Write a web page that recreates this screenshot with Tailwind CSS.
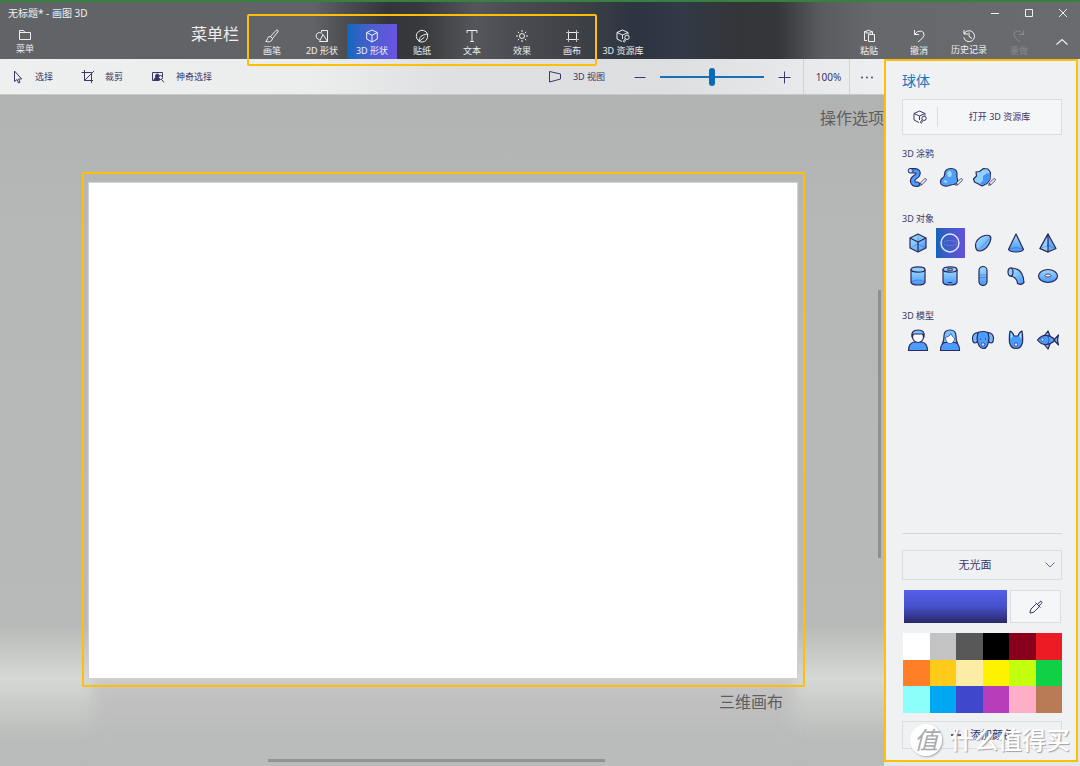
<!DOCTYPE html>
<html lang="zh-CN">
<head>
<meta charset="utf-8">
<meta name="viewport" content="width=device-width, initial-scale=1">
<title>无标题* - 画图 3D</title>
<script src="https://cdn.jsdelivr.net/npm/@tailwindcss/browser@4"></script>
</head>
<body class="flex h-screen flex-col overflow-hidden bg-[#e4e5e7] font-['Noto_Sans','Noto_Sans_CJK_SC',sans-serif] text-[9px] leading-3 text-[#3b3768]">

<svg class="absolute size-0" aria-hidden="true">
  <defs>
    <linearGradient id="blue" x1="0" y1="0" x2="1" y2="1"><stop offset=".3" stop-color="#8fd0ff"/><stop offset="1" stop-color="#4493fb"/></linearGradient>
    <linearGradient id="down" x1="0" y1="0" x2="0" y2="1"><stop offset=".2" stop-color="#8fd0ff"/><stop offset="1" stop-color="#4493fb"/></linearGradient>
    <symbol id="library" viewBox="0 0 16 16">
      <path d="M7 13.500 2 11V4.500L7.500 2 13 4.500V6.500M2 4.500 7.500 7 13 4.500M7.500 7v4"/>
      <circle cx="12" cy="9.300" r="2.200"/><path d="m10.300 11-1.600 1.500q-.7 1.500.6 1.500 1.200-.3 1-2.200"/>
    </symbol>
    <symbol id="pencil" viewBox="0 0 8 8"><path d="M.7 7.300 1.300 5 5.500.9Q6.500.3 7.200 1T7 2.700L2.800 6.800ZM1.300 5l1.500 1.800" fill="#f0f1f3" stroke="#2f2a5e" stroke-width=".8"/></symbol>
  </defs>
</svg>

<!-- Title bar and ribbon -->
<header class="relative shrink-0 border-t-2 border-[#37803f] bg-[linear-gradient(90deg,#626367_0%,#626367_29%,#4c4d50_32%,#343538_36%,#38393c_39%,#55565b_44%,#4a4b50_48%,#404247_53%,#2c3441_59%,#313a46_63%,#343539_68%,#35363a_72%,#5a5b5f_76%,#67686c_81%,#6a6b6f_100%)] text-white/90">
  <div class="flex h-[22px] items-center justify-between">
    <h1 class="pl-2 text-[10px]">无标题* - 画图 3D</h1>
    <div class="flex">
      <button class="grid h-5 w-[34px] place-items-center" aria-label="最小化"><svg class="size-3" viewBox="0 0 12 12" stroke="currentColor"><path d="M2 6.500h8"/></svg></button>
      <button class="grid h-5 w-[34px] place-items-center" aria-label="最大化"><svg class="size-3" viewBox="0 0 12 12" fill="none" stroke="currentColor"><path d="M2.500 2.500h7v7h-7z"/></svg></button>
      <button class="grid h-5 w-[34px] place-items-center" aria-label="关闭"><svg class="size-3" viewBox="0 0 12 12" fill="none" stroke="currentColor"><path d="m2 2 8 8m0-8-8 8"/></svg></button>
    </div>
  </div>
  <div class="flex h-[35px] justify-between">
    <div class="flex">
      <div class="flex w-[248px] justify-between pr-[9px]">
        <button class="flex w-[50px] flex-col items-center pt-[3px]"><svg class="size-4" viewBox="0 0 16 16" fill="none" stroke="currentColor"><path d="M2.500 12.500v-9h4l1.500 2h5.500v7zM2.500 5.500H8"/></svg><span>菜单</span></button>
        <span class="text-[16px] leading-5">菜单栏</span>
      </div>
      <nav class="relative -ml-px flex">
        <button class="flex w-[50px] flex-col items-center pt-1"><svg class="size-4" viewBox="0 0 16 16" fill="none" stroke="currentColor"><path d="M6.500 8.500 12 2.500q1-1 1.800-.3t0 1.800L8.500 10.500zM6.500 8.500q-2.500-.2-3 2Q3 12.800 1.700 13.300q2 .9 4 .4 2.400-.6 2.800-3.200z"/></svg><span class="leading-[14px]">画笔</span></button>
        <button class="flex w-[50px] flex-col items-center pt-1"><svg class="size-4" viewBox="0 0 16 16" fill="none" stroke="currentColor"><path d="M7.500 4V2.500h6v10.500M5.500 11.500a3.500 3.500 0 1 1 3-5.500M9 6.500 5.500 13.500h8z"/></svg><span class="leading-[14px]">2D 形状</span></button>
        <button aria-pressed="true" class="flex w-[50px] flex-col items-center bg-linear-to-r from-[#0567bd] to-[#6a52e2] pt-1"><svg class="size-4" viewBox="0 0 16 16" fill="none" stroke="currentColor" stroke-linejoin="round"><path d="M8 2 13.300 4.500v6.500L8 14 2.700 11V4.500zM2.700 4.500 8 7.300l5.300-2.800M8 7.300V14"/></svg><span class="leading-[14px]">3D 形状</span></button>
        <button class="flex w-[50px] flex-col items-center pt-1"><svg class="size-4" viewBox="0 0 16 16" fill="none" stroke="currentColor"><path d="M13.500 6A5.800 5.800 0 1 0 5 13M5 13.500q-.5-6.500 8.700-7.500.3 8-5.700 8-1.700 0-3-.5Zm0 0 5.500-4.500"/></svg><span class="leading-[14px]">贴纸</span></button>
        <button class="flex w-[50px] flex-col items-center pt-1"><svg class="size-4" viewBox="0 0 16 16" fill="none" stroke="currentColor"><path d="M3 5V2.500h10V5M8 2.500v11M6 13.500h4"/></svg><span class="leading-[14px]">文本</span></button>
        <button class="flex w-[50px] flex-col items-center pt-1"><svg class="size-4" viewBox="0 0 16 16" fill="none" stroke="currentColor"><circle cx="8" cy="8" r="2.500"/><path d="M8 2v2M8 12v2M2 8h2M12 8h2M3.800 3.800l1.400 1.400M10.800 10.800l1.400 1.400M3.800 12.200l1.400-1.400M10.800 5.200l1.400-1.400"/></svg><span class="leading-[14px]">效果</span></button>
        <button class="flex w-[50px] flex-col items-center pt-1"><svg class="size-4" viewBox="0 0 16 16" fill="none" stroke="currentColor"><path d="M4.500 4.500h8v7h-8z"/><path d="M4.500 2v2M12.500 2v2M4.500 12v2M12.500 12v2M2 4.500h2M13 4.500h2M2 11.500h2M13 11.500h2" stroke-opacity=".7"/></svg><span class="leading-[14px]">画布</span></button>
        <div class="pointer-events-none absolute -top-[10px] right-0 -bottom-[7px] left-0 z-10 rounded-xs border-2 border-[#ffbf08]"></div>
      </nav>
      <button class="flex w-[52px] flex-col items-center pt-1"><svg class="size-4" fill="none" stroke="currentColor"><use href="#library"/></svg><span class="leading-[14px]">3D 资源库</span></button>
    </div>
    <div class="flex">
      <button class="flex w-[50px] flex-col items-center pt-1"><svg class="size-4" viewBox="0 0 16 16" fill="none" stroke="currentColor"><path d="M6 12.500H3.500v-9H5M10 3.500h1.500V6M5 5V3h1.500q0-1 1-1t1 1H10v2zM7.500 6.500h6v7h-6z"/></svg><span class="leading-[14px]">粘贴</span></button>
      <button class="flex w-[50px] flex-col items-center pt-1"><svg class="size-4" viewBox="0 0 16 16" fill="none" stroke="currentColor"><path d="M3.500 2v4.500H8M3.500 6.500q3-4 6.500-3.500 3.500.8 3 4.500-.5 2.500-6 6.500"/></svg><span class="leading-[14px]">撤消</span></button>
      <button class="flex w-[50px] flex-col items-center pt-1"><svg class="size-4" viewBox="0 0 16 16" fill="none" stroke="currentColor"><path d="M3 2v4h4M3 6a5.500 5.500 0 1 1-.3 3.500M8 4.500v4l3 2"/></svg><span>历史记录</span></button>
      <button disabled class="flex w-[50px] flex-col items-center pt-1 text-white/20"><svg class="size-4" viewBox="0 0 16 16" fill="none" stroke="currentColor"><path d="M12.500 2v4.500H8M12.500 6.500q-3-4-6.500-3.500-3.500.8-3 4.500.5 2.500 6 6.500"/></svg><span class="leading-[14px]">重做</span></button>
      <button class="grid w-9 place-items-center" aria-label="折叠"><svg class="size-4" viewBox="0 0 16 16" fill="none" stroke="currentColor" stroke-width="1.200"><path d="m2.500 10.500 5.500-5 5.500 5"/></svg></button>
    </div>
  </div>
</header>

<div class="flex min-h-0 flex-1">
  <main class="flex min-w-0 flex-1 flex-col">
    <!-- Command bar -->
    <div class="flex h-9 shrink-0 items-center justify-between border-b border-[#c8caca] bg-[linear-gradient(90deg,#eef0f0_0%,#eceeee_35%,#dfe0e1_50%,#dddedf_75%,#eeeff0_100%)]">
      <div class="flex gap-[27px] pl-[9px]">
        <button class="flex items-center gap-[10px]"><svg class="size-4" viewBox="0 0 16 16" fill="none" stroke="currentColor"><path d="M5.500 2v10.500l2.500-2 1.500 3.500 1.500-.7-1.400-3.300h3z"/></svg><span>选择</span></button>
        <button class="flex items-center gap-[9px]"><svg class="size-4" viewBox="0 0 16 16" fill="none" stroke="currentColor"><path d="M4.500 1v10.500H13M1.500 3.500h10V14M4.500 11.500 14 2"/></svg><span>裁剪</span></button>
        <button class="flex items-center gap-[10px]"><svg class="size-4" viewBox="0 0 16 16" fill="none" stroke="currentColor"><path d="M9 11.500H2.500v-8h10V8"/><path d="M4 11q0-2 2-2.500-1.500-3 1.300-3.500Q10 5.500 8.500 8.500L10 11z" fill="currentColor"/><circle cx="10.500" cy="8.500" r="2"/><path d="m11.500 10.500 2.500 3"/></svg><span>神奇选择</span></button>
      </div>
      <div class="flex h-full items-center">
        <button class="flex items-center gap-[10px]"><svg class="size-4" viewBox="0 0 16 16" fill="none" stroke="currentColor"><path d="M2.500 2.500 13.500 5v5l-11 3z"/></svg><span>3D 视图</span></button>
        <button class="ml-[27px]" aria-label="缩小"><svg class="size-4" viewBox="0 0 16 16" stroke="currentColor"><path d="M2.500 8.500h11"/></svg></button>
        <input type="range" min="0" max="100" value="50" aria-label="缩放" class="mx-3 h-5 w-[104px] cursor-pointer appearance-none bg-transparent [&::-webkit-slider-runnable-track]:h-0.5 [&::-webkit-slider-runnable-track]:bg-[#1a6fb5] [&::-webkit-slider-thumb]:-mt-2 [&::-webkit-slider-thumb]:h-[18px] [&::-webkit-slider-thumb]:w-1.5 [&::-webkit-slider-thumb]:appearance-none [&::-webkit-slider-thumb]:rounded-full [&::-webkit-slider-thumb]:bg-[#0a69b9]">
        <button aria-label="放大"><svg class="size-4" viewBox="0 0 16 16" stroke="currentColor"><path d="M2.500 8.500h12M8.500 2.500v12"/></svg></button>
        <button class="ml-[11px] h-full w-[47px] border-x border-[#d0d2d4] pl-1 text-center text-[10px]">100%</button>
        <button class="grid w-[34px] place-items-center" aria-label="更多"><svg class="size-4" viewBox="0 0 16 16" fill="currentColor"><circle cx="3" cy="8.500" r=".9"/><circle cx="8" cy="8.500" r=".9"/><circle cx="13" cy="8.500" r=".9"/></svg></button>
      </div>
    </div>

    <!-- Stage -->
    <div class="relative flex min-h-0 flex-1 flex-col overflow-hidden bg-[linear-gradient(180deg,#b1b3b2_0%,#b6b8b7_20%,#b8bab9_79%,#d5d8d4_87%,#c8cbc8_91%,#babcbb_96%,#b9bbba_100%)] pl-[82px] text-[16px] text-[#5e5e5e]">
      <div class="flex h-[77px] shrink-0 justify-end pt-[13px] leading-5">操作选项</div>
      <section class="relative mr-[79px] flex min-h-0 flex-1">
        <div class="absolute top-full right-3 left-3 -mt-2 h-28 bg-[linear-gradient(180deg,#c6c5c5_0%,#bfbfbf_25%,#babbbb_50%,#b9bbba_100%)] blur-[6px]"></div>
        <div class="relative flex flex-1 rounded-xs border-2 border-[#ffbf08] pt-[9px] pr-1.5 pb-[7px] pl-[5px]">
          <div class="flex-1 bg-white shadow-[0_0_1px_1px_#cfd1cf]"></div>
        </div>
      </section>
      <div class="relative mr-[101px] flex h-[79px] shrink-0 justify-end pt-[5px] leading-5">三维画布</div>
      <div class="absolute top-[195px] right-[3px] h-[268px] w-[3px] bg-[#8e9090]"></div>
      <div class="absolute bottom-1 left-[268px] h-[3px] w-[337px] bg-[#929493]"></div>
    </div>
  </main>

  <!-- Shape panel -->
  <aside class="relative mr-0.5 mb-1 flex w-[194px] shrink-0 flex-col border-2 border-[#ffbf08] bg-[#f0f1f3] pr-3.5 pl-4">
    <h2 class="mt-2.5 text-[14px] leading-5 text-[#1a77c0]">球体</h2>
    <button class="mt-2 flex h-9 items-center border border-[#dcdde3] bg-[#f5f6f8]"><span class="grid h-5 w-[35px] place-items-center border-r border-[#dcdde3]"><svg class="size-4" fill="none" stroke="currentColor"><use href="#library"/></svg></span><span class="flex-1">打开 3D 资源库</span></button>

    <h3 class="mt-[13px]">3D 涂鸦</h3>
    <div class="mt-1.5 flex gap-[9px] pl-1">
      <button class="size-6" aria-label="管状涂鸦"><svg class="size-6 overflow-visible" viewBox="0 0 24 24" fill="none"><path d="M4.500 4.800H9q3.500.2 3 3-.5 2-3 3.500-3 2-2.200 4.700.8 2.500 4.700 2.200" stroke="#2c2858" stroke-width="5.400" stroke-linecap="round"/><path d="M4.500 4.800H9q3.500.2 3 3-.5 2-3 3.500-3 2-2.200 4.700.8 2.500 4.700 2.200" stroke="#4b9cff" stroke-width="3.200" stroke-linecap="round"/><circle cx="4.300" cy="4.800" r="1.700" fill="#a7dcff"/><path d="M7 3.200v3.200" stroke="#2c2858" stroke-width=".8"/><use href="#pencil" x="13" y="12" width="8" height="8"/></svg></button>
      <button class="size-6" aria-label="柔边涂鸦"><svg class="size-6 overflow-visible" viewBox="0 0 24 24"><path d="M5.500 9q0-6.500 6.500-6.500T18 9q-.5 2 .5 4 1 5-4 5.500-2 0-4 1-6 2-8.500-1.500-1.500-4 1.500-6Q5.500 11 5.500 9z" fill="#4f9ffd" stroke="#2c2858" stroke-width="1.200"/><ellipse cx="10.500" cy="8" rx="2.200" ry="3" fill="#a0dcff"/><path d="m5 15 3 1" stroke="#a0dcff" stroke-width="2"/><use href="#pencil" x="16" y="12" width="8" height="8"/></svg></button>
      <button class="size-6" aria-label="锐边涂鸦"><svg class="size-6 overflow-visible" viewBox="0 0 24 24"><path d="m4 6 3.500-.5 4-3 4.500.5 2.500 3.500-.5 7-3 4-5 2.500-3.500-2L2.500 16l-1-3 3-3z" fill="#8fd0ff" stroke="#2c2858" stroke-width="1.200" stroke-linejoin="round"/><path d="m18 7-.5 6.500-3 3.500-4.300 2.200L8 17l3-2v-5l3.500-2.500z" fill="#4493fb"/><use href="#pencil" x="16" y="12" width="8" height="8"/></svg></button>
    </div>

    <h3 class="mt-[23px]">3D 对象</h3>
    <div class="mt-[3px] -mr-px grid grid-cols-5 gap-[3px] pl-px [&>button]:grid [&>button]:h-[30px] [&>button]:place-items-center [&_svg]:size-6 [&_svg]:overflow-visible">
      <button aria-label="立方体"><svg viewBox="0 0 24 24" fill="url(#blue)" stroke="#2c2858" stroke-width="1.200" stroke-linejoin="round"><path d="m12 3 8 4v10l-8 4-8-4V7z"/><path d="m4 7 8 4 8-4M12 11v10" fill="none"/><path d="M12 3v10m-8 4 8-4 8 4" fill="none" stroke-width=".3"/></svg></button>
      <button aria-label="球体" aria-pressed="true" class="bg-linear-to-r from-[#1163ba] to-[#6250dc]"><svg viewBox="0 0 24 24" fill="none" stroke="#e4e9fb"><circle cx="12" cy="12" r="9" stroke-width="1.400"/><path d="M3 12q9 5 18 0M3 12q9-5 18 0" stroke-width=".5" stroke-dasharray="2 1" opacity=".6"/></svg></button>
      <button aria-label="半球"><svg viewBox="0 0 24 24" fill="url(#blue)" stroke="#2c2858" stroke-width="1.200"><path d="M19.500 5.500Q17 3 11 5.500 5 8.500 4.500 14q0 6 4 6Q15 19.500 18.500 12q2-4.500 1-6.500Z"/><path d="M19.500 5.500Q18 8 14 12.500T6.500 20" fill="none" stroke-width=".3"/></svg></button>
      <button aria-label="圆锥"><svg viewBox="0 0 24 24" fill="url(#down)" stroke="#2c2858" stroke-width="1.200" stroke-linejoin="round"><path d="M12 3 4.500 18.500Q6 21 12 21t7.500-2.500z"/><path d="M5 18q7-3 14 0" fill="none" stroke-width=".3"/></svg></button>
      <button aria-label="棱锥"><svg viewBox="0 0 24 24" fill="#62adfc" stroke="#2c2858" stroke-width="1.200" stroke-linejoin="round"><path d="M12 3 4 17.500l8 3.500 8-3.500z"/><path d="M12 3 4 17.500l8 3.500z" fill="#8fd0ff"/><path d="m4 17.500 8-3 8 3" fill="none" stroke-width=".3"/></svg></button>
      <button aria-label="圆柱体"><svg viewBox="0 0 24 24" fill="url(#down)" stroke="#2c2858" stroke-width="1.200"><path d="M5 5.500v13Q6 21 12 21t7-2.500v-13"/><ellipse cx="12" cy="5.500" rx="7" ry="2.700" fill="#8fd0ff"/><path d="M5 18q7-4 14 0" fill="none" stroke-width=".3"/></svg></button>
      <button aria-label="管"><svg viewBox="0 0 24 24" fill="url(#down)" stroke="#2c2858" stroke-width="1.200"><path d="M5 5.500v13Q6 21 12 21t7-2.500v-13"/><ellipse cx="12" cy="5.500" rx="7" ry="2.700" fill="#8fd0ff"/><ellipse cx="12" cy="5.500" rx="3" ry=".8" fill="#fff" stroke-width="1"/><ellipse cx="12" cy="18.500" rx="2.500" ry=".6" fill="#2c2858" stroke="none"/></svg></button>
      <button aria-label="胶囊"><svg viewBox="0 0 24 24" fill="url(#down)" stroke="#2c2858" stroke-width="1.200"><rect x="8" y="2.500" width="8" height="19" rx="4"/><path d="M8 11h8M8 13.500h8" fill="none" stroke-width=".3"/></svg></button>
      <button aria-label="弯管"><svg viewBox="0 0 24 24" fill="url(#blue)" stroke="#2c2858" stroke-width="1.200" stroke-linejoin="round"><path d="M6.500 4q12.500-.5 13.500 14.500-2.500 3-6.500 1Q13 13 6 12z"/><ellipse cx="6.500" cy="8" rx="2.500" ry="4" fill="#8fd0ff"/></svg></button>
      <button aria-label="圆环"><svg viewBox="0 0 24 24" fill="url(#down)" stroke="#2c2858" stroke-width="1.200"><ellipse cx="12" cy="12" rx="9.500" ry="6.500"/><ellipse cx="12" cy="11.500" rx="3" ry="1.500" fill="#f0f1f3" stroke-width=".8"/></svg></button>
    </div>

    <h3 class="mt-[19px]">3D 模型</h3>
    <div class="mt-[3px] -mr-px grid grid-cols-5 gap-[3px] pl-px [&>button]:grid [&>button]:h-[30px] [&>button]:place-items-center [&_svg]:size-6 [&_svg]:overflow-visible">
      <button aria-label="男人"><svg viewBox="0 0 24 24" fill="#4b9cff" stroke="#2c2858" stroke-width="1.200"><path d="M2.500 22.500q0-7.500 6-8.500h7q6 1 6 8.500z"/><circle cx="12" cy="9" r="5.500" fill="#fff"/><path d="M6 9.500Q4.500 2 12 2t6 7.500Q17.500 6 16 6H8Q6.500 6 6 9.500z" fill="#75c3ff"/></svg></button>
      <button aria-label="女人"><svg viewBox="0 0 24 24" fill="#4b9cff" stroke="#2c2858" stroke-width="1.200"><path d="M4.500 15Q6 13 6 8q0-6 6-6t6 6q0 5 1.500 7z" fill="#75c6ff"/><path d="M2.500 22.500Q2.500 15.500 7 14.500h10q4.500 1 4.500 8z"/><path d="M13 5.500q-1 3-5.500 4 .5 6 4.500 6t4.500-5.500Q14 9 13 5.500" fill="#fff" stroke-width=".6"/></svg></button>
      <button aria-label="狗"><svg viewBox="0 0 24 24" fill="#72baff" stroke="#2c2858" stroke-width="1.200"><path d="M7 4.500Q2 5 1.500 10q0 5 2.500 5 3.500 0 3-7zM17 4.500q5 .5 5.500 5.500 0 5-2.500 5-3.500 0-3-7z"/><path d="M7 4.500q5-2 10 0l1 5.500q-1 11-6 10.500T6 10z" fill="#4b9cff"/><circle cx="12" cy="16.500" r="1.700" fill="#d9e9fa" stroke-width=".7"/><path d="M9 11h1M14 11h1"/></svg></button>
      <button aria-label="猫"><svg viewBox="0 0 24 24" fill="#4b9cff" stroke="#2c2858" stroke-width="1.200" stroke-linejoin="round"><path d="M6 3q3 1 4 5h4q1-4 4-5 1 5 .5 11.500-1.500 6-6.500 6t-6.500-6Q5 8 6 3z"/><path d="M6.700 4.500q2 1.500 2.300 4l-2.500 2zm10.600 0q-2 1.500-2.300 4l2.500 2z" fill="#a0dcff" stroke="none"/><circle cx="12" cy="16.500" r="1.700" fill="#d9e9fa" stroke-width=".7"/></svg></button>
      <button aria-label="鱼"><svg viewBox="0 0 24 24" fill="#4b9cff" stroke="#2c2858" stroke-width="1.200" stroke-linejoin="round"><path d="m8 8 4-5 2 5zm0 8 4 5 2-5z" fill="#72baff"/><path d="m18 12 4.500-5-1 5 1 5z" fill="#72baff"/><path d="M1.500 12Q8 3.500 18 10.500v3Q8 20.500 1.500 12Z"/><circle cx="6.500" cy="11.500" r="1.500" fill="#d9e9fa" stroke-width=".6"/><path d="M12 8q2 4 0 8" fill="none" stroke-width=".5"/></svg></button>
    </div>

    <div class="mt-auto mb-[11px] border-t border-[#d6d7da] pt-4">
      <div class="relative">
        <select aria-label="材质" class="h-[30px] w-full appearance-none border border-[#dcdde3] bg-transparent pr-3.5 text-center text-[11px]"><option>无光面</option><option>光泽</option></select>
        <svg class="pointer-events-none absolute top-[7px] right-1 size-4" viewBox="0 0 16 16" fill="none" stroke="#6b6890"><path d="m3.500 5.500 4.500 4.500 4.500-4.500"/></svg>
      </div>
      <div class="mt-2.5 flex h-[33px] gap-[3px] pr-px pl-0.5">
        <button aria-label="当前颜色" class="flex-1 bg-linear-to-b from-[#5560ea] via-[#4750cc] to-[#2a2968]"></button>
        <button aria-label="取色器" class="grid w-[51px] place-items-center border border-[#dcdde3] bg-[#f5f6f8]"><svg class="size-4" viewBox="0 0 16 16" fill="none" stroke="currentColor"><path d="m8.500 4.500-5.500 5.500Q2 12 2 14q2 0 4-1l5.500-5.500M7.500 3.500l5 5M9.500 5.500 12 2.500q1-.8 1.700.2t-.2 1.800L10.500 7"/></svg></button>
      </div>
      <div class="mt-2.5 grid h-20 grid-cols-6 grid-rows-3 pl-px">
        <button aria-label="白色" class="bg-white"></button><button aria-label="浅灰" class="bg-[#c3c3c3]"></button><button aria-label="深灰" class="bg-[#585858]"></button><button aria-label="黑色" class="bg-black"></button><button aria-label="深红" class="bg-[#88001b]"></button><button aria-label="红色" class="bg-[#ec1c24]"></button>
        <button aria-label="橙色" class="bg-[#ff7f27]"></button><button aria-label="金色" class="bg-[#ffca18]"></button><button aria-label="淡黄" class="bg-[#fdeca6]"></button><button aria-label="黄色" class="bg-[#fff200]"></button><button aria-label="柠檬绿" class="bg-[#c4ff0e]"></button><button aria-label="绿色" class="bg-[#0ed145]"></button>
        <button aria-label="青色" class="bg-[#8cfffb]"></button><button aria-label="天蓝" class="bg-[#00a8f3]"></button><button aria-label="靛蓝" class="bg-[#3f48cc]"></button><button aria-label="紫色" class="bg-[#b83dba]"></button><button aria-label="粉色" class="bg-[#ffaec8]"></button><button aria-label="棕色" class="bg-[#b97a56]"></button>
      </div>
      <button class="mt-2 flex h-7 w-full items-center justify-center gap-2 border border-[#dcdde3] text-[11px] text-[#2f2a5e]"><svg class="size-3" viewBox="0 0 12 12" stroke="currentColor" stroke-width="1.500"><path d="M1 6h10M6 1v10"/></svg>添加颜色</button>
    </div>

    <!-- Watermark -->
    <div class="pointer-events-none absolute right-0 bottom-1 flex items-center gap-2 pr-1.5 whitespace-nowrap text-white">
      <span class="grid size-8 place-items-center rounded-full bg-white/95 text-[24px] leading-8 text-[#a9aaae] italic shadow-[1px_1px_2px_#a5a6a9]">值</span>
      <span class="text-[24px] leading-8 font-medium [text-shadow:1px_1px_1px_#a0a1a5]">什么值得买</span>
    </div>
  </aside>
</div>
</body>
</html>
